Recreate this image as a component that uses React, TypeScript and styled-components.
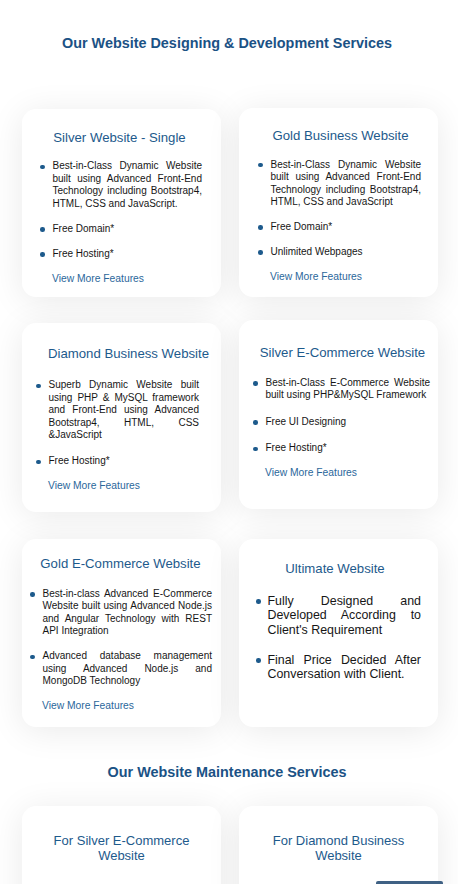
import React from "react";
import styled, { createGlobalStyle } from "styled-components";

const GlobalStyle = createGlobalStyle`
  html, body {
    margin: 0;
    padding: 0;
    background: #ffffff;
    font-family: "Liberation Sans", Arial, sans-serif;
  }
  * { box-sizing: border-box; }
`;

const Page = styled.div`
  width: 458px;
  padding: 34.5px 0 0 0;
  overflow: hidden;
`;

const SectionTitle = styled.h2<{ $mt?: number; $mb: number }>`
  margin: ${(p) => p.$mt ?? 0}px 0 ${(p) => p.$mb}px 0;
  text-align: center;
  font-size: 14.4px;
  line-height: 17px;
  font-weight: 700;
  color: #1b5285;
  padding-right: 4px;
`;

const Grid = styled.div`
  display: grid;
  grid-template-columns: 199px 199px;
  column-gap: 18px;
  row-gap: 23px;
  padding-left: 22px;
  align-items: start;
`;

const Card = styled.div<{ $pt: number; $h: number; $mt?: number }>`
  background: #ffffff;
  border-radius: 14px;
  box-shadow: 0 4px 34px rgba(0, 0, 0, 0.085);
  padding-top: ${(p) => p.$pt}px;
  min-height: ${(p) => p.$h}px;
  margin-top: ${(p) => p.$mt ?? 0}px;
  display: flex;
  flex-direction: column;
`;

const CardTitle = styled.h3<{ $shift: number; $gap: number }>`
  margin: 0 0 ${(p) => p.$gap}px 0;
  padding-left: ${(p) => (p.$shift > 0 ? p.$shift * 2 : 0)}px;
  padding-right: ${(p) => (p.$shift < 0 ? -p.$shift * 2 : 0)}px;
  text-align: center;
  font-size: 13.2px;
  line-height: 16px;
  font-weight: 400;
  color: #1d5a8c;
  white-space: nowrap;
`;

const List = styled.ul<{ $pl: number; $pr: number; $gap: number }>`
  list-style: none;
  margin: 0;
  padding: 0 ${(p) => p.$pr}px 0 ${(p) => p.$pl}px;
  display: flex;
  flex-direction: column;
  gap: ${(p) => p.$gap}px;
`;

const Item = styled.li<{ $big?: boolean }>`
  display: flex;
  align-items: flex-start;
  gap: ${(p) => (p.$big ? 7 : 8)}px;
  font-size: ${(p) => (p.$big ? 12.4 : 10)}px;
  line-height: ${(p) => (p.$big ? 14.5 : 12.5)}px;
  color: #161616;
`;

const Dot = styled.span<{ $big?: boolean }>`
  flex: 0 0 4.5px;
  width: 4.5px;
  height: 4.5px;
  border-radius: 50%;
  background: #1d5a8c;
  margin-top: ${(p) => (p.$big ? 5.5 : 4.25)}px;
`;

const ItemText = styled.span`
  flex: 1;
  text-align: justify;
`;

const MoreLink = styled.a<{ $pl: number; $gap: number }>`
  display: block;
  margin-top: ${(p) => p.$gap}px;
  padding-left: ${(p) => p.$pl}px;
  font-size: 10.3px;
  line-height: 12.5px;
  color: #2b679b;
  text-decoration: none;
`;

const MaintTitle = styled.h3`
  margin: 0;
  padding: 0 25px;
  text-align: center;
  font-size: 13px;
  line-height: 15px;
  font-weight: 400;
  color: #1d5a8c;
`;

const FloatButton = styled.div`
  position: fixed;
  top: 881px;
  right: 15px;
  width: 67px;
  height: 30px;
  background: #3f6184;
  border-radius: 2px;
`;

type CardData = {
  title: string;
  items: string[];
  more: boolean;
  big?: boolean;
  pt: number;
  pl: number;
  pr: number;
  titleGap: number;
  shift: number;
  h: number;
  mt?: number;
  itemGap: number;
};

const cards: CardData[] = [
  {
    title: "Silver Website - Single",
    items: [
      "Best-in-Class Dynamic Website built using Advanced Front-End Technology including Bootstrap4, HTML, CSS and JavaScript.",
      "Free Domain*",
      "Free Hosting*",
    ],
    more: true,
    pt: 21,
    pl: 18,
    pr: 19,
    titleGap: 14.25,
    shift: -2,
    h: 188,
    mt: 1,
    itemGap: 12.5,
  },
  {
    title: "Gold Business Website",
    items: [
      "Best-in-Class Dynamic Website built using Advanced Front-End Technology including Bootstrap4, HTML, CSS and JavaScript",
      "Free Domain*",
      "Unlimited Webpages",
    ],
    more: true,
    pt: 20,
    pl: 19,
    pr: 17,
    titleGap: 14.5,
    shift: 2,
    h: 189,
    itemGap: 12.5,
  },
  {
    title: "Diamond Business Website",
    items: [
      "Superb Dynamic Website built using PHP & MySQL framework and Front-End using Advanced Bootstrap4, HTML, CSS &JavaScript",
      "Free Hosting*",
    ],
    more: true,
    pt: 23,
    pl: 14,
    pr: 22,
    titleGap: 17.25,
    shift: 7,
    h: 189,
    mt: 3,
    itemGap: 13.5,
  },
  {
    title: "Silver E-Commerce Website",
    items: [
      "Best-in-Class E-Commerce Website built using PHP&MySQL Framework",
      "Free UI Designing",
      "Free Hosting*",
    ],
    more: true,
    pt: 25,
    pl: 14,
    pr: 8,
    titleGap: 15.75,
    shift: 4,
    h: 189,
    itemGap: 14,
  },
  {
    title: "Gold E-Commerce Website",
    items: [
      "Best-in-class Advanced E-Commerce Website built using Advanced Node.js and Angular Technology with REST API Integration",
      "Advanced database management using Advanced Node.js and MongoDB Technology",
    ],
    more: true,
    pt: 17,
    pl: 8,
    pr: 9,
    titleGap: 15.75,
    shift: -1,
    h: 188,
    mt: 4,
    itemGap: 12.5,
  },
  {
    title: "Ultimate Website",
    items: [
      "Fully Designed and Developed According to Client's Requirement",
      "Final Price Decided After Conversation with Client.",
    ],
    more: false,
    big: true,
    pt: 22,
    pl: 17,
    pr: 17,
    titleGap: 16.75,
    shift: -3.5,
    h: 188,
    mt: 4,
    itemGap: 15.5,
  },
];

const maintenance = ["For Silver E-Commerce Website", "For Diamond Business Website"];

export default function App() {
  return (
    <>
      <GlobalStyle />
      <Page>
        <SectionTitle $mb={56.5}>Our Website Designing &amp; Development Services</SectionTitle>
        <Grid>
          {cards.map((c) => (
            <Card key={c.title} $pt={c.pt} $h={c.h} $mt={c.mt}>
              <CardTitle $shift={c.shift} $gap={c.titleGap}>
                {c.title}
              </CardTitle>
              <List $pl={c.pl} $pr={c.pr} $gap={c.itemGap}>
                {c.items.map((it) => (
                  <Item key={it} $big={c.big}>
                    <Dot $big={c.big} />
                    <ItemText>{it}</ItemText>
                  </Item>
                ))}
              </List>
              {c.more && (
                <MoreLink href="#" $pl={c.pl + 12} $gap={12.5}>
                  View More Features
                </MoreLink>
              )}
            </Card>
          ))}
        </Grid>
        <SectionTitle $mt={36.5} $mb={25}>
          Our Website Maintenance Services
        </SectionTitle>
        <Grid>
          {maintenance.map((m) => (
            <Card key={m} $pt={27} $h={160}>
              <MaintTitle>{m}</MaintTitle>
            </Card>
          ))}
        </Grid>
      </Page>
      <FloatButton />
    </>
  );
}
